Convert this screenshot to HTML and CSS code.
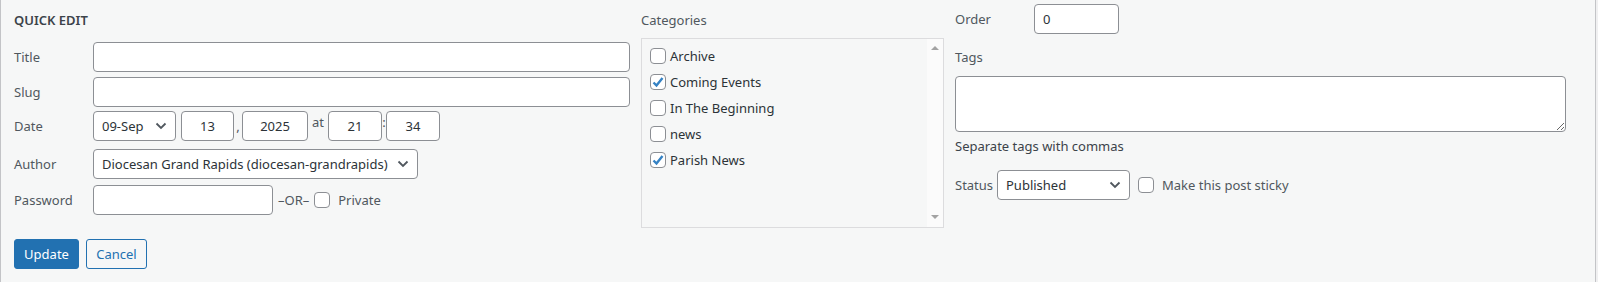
FILE: index.html
```html
<!DOCTYPE html>
<html lang="en">
<head>
	<meta charset="UTF-8">
	<title>Quick Edit</title>
<link rel="stylesheet" href="styles.css">
</head>
<body>
	<div class="quick-edit">
		<div class="col-left">
			<div class="legend">QUICK EDIT</div>
			<div class="field field-title">
				<span class="field-label">Title</span>
				<input class="text wide" type="text" value="">
			</div>
			<div class="field field-slug">
				<span class="field-label">Slug</span>
				<input class="text wide" type="text" value="">
			</div>
			<div class="field field-date">
				<span class="field-label">Date</span>
				<div class="select sel-month">
					<span>09-Sep</span>
					<svg class="chev" width="12" height="8" viewBox="0 0 12 8"><polyline points="1.5,1.5 6,6 10.5,1.5" fill="none" stroke="#50575e" stroke-width="1.8"/></svg>
				</div>
				<input class="text num day" type="text" value="13">
				<span class="sep sep-comma">,</span>
				<input class="text num year" type="text" value="2025">
				<span class="sep sep-at">at</span>
				<input class="text num hour" type="text" value="21">
				<span class="sep sep-colon">:</span>
				<input class="text num minute" type="text" value="34">
			</div>
			<div class="field field-author">
				<span class="field-label">Author</span>
				<div class="select sel-author">
					<span>Diocesan Grand Rapids (diocesan-grandrapids)</span>
					<svg class="chev" width="12" height="8" viewBox="0 0 12 8"><polyline points="1.5,1.5 6,6 10.5,1.5" fill="none" stroke="#50575e" stroke-width="1.8"/></svg>
				</div>
			</div>
			<div class="field field-password">
				<span class="field-label">Password</span>
				<input class="text pass" type="text" value="">
				<span class="or">&ndash;OR&ndash;</span>
				<span class="check"></span>
				<span class="check-text">Private</span>
			</div>
			<div class="buttons">
				<a href="javascript:;" class="btn btn-primary">Update</a>
				<a href="javascript:;" class="btn btn-secondary">Cancel</a>
			</div>
		</div>

		<div class="col-center">
			<div class="cat-label">Categories</div>
			<div class="cat-box">
				<ul class="cat-list">
					<li><span class="check"></span>Archive</li>
					<li><span class="check checked"><svg width="14" height="14" viewBox="0 0 14 14"><polyline points="2.5,7.5 5.5,10.5 11.5,3" fill="none" stroke="#3582c4" stroke-width="2.4"/></svg></span>Coming Events</li>
					<li><span class="check"></span>In The Beginning</li>
					<li><span class="check"></span>news</li>
					<li><span class="check checked"><svg width="14" height="14" viewBox="0 0 14 14"><polyline points="2.5,7.5 5.5,10.5 11.5,3" fill="none" stroke="#3582c4" stroke-width="2.4"/></svg></span>Parish News</li>
				</ul>
				<div class="scrollbar">
					<span class="arrow-up"></span>
					<span class="arrow-down"></span>
				</div>
			</div>
		</div>

		<div class="col-right">
			<div class="field field-order">
				<span class="field-label">Order</span>
				<input class="text order" type="text" value="0">
			</div>
			<div class="tags-label">Tags</div>
			<textarea class="tags"></textarea>
			<div class="howto">Separate tags with commas</div>
			<div class="field field-status">
				<span class="status-label">Status</span>
				<div class="select sel-status">
					<span>Published</span>
					<svg class="chev" width="12" height="8" viewBox="0 0 12 8"><polyline points="1.5,1.5 6,6 10.5,1.5" fill="none" stroke="#50575e" stroke-width="1.8"/></svg>
				</div>
				<span class="check sticky"></span>
				<span class="check-text">Make this post sticky</span>
			</div>
		</div>
	</div>
</body>
</html>
```

FILE: styles.css
```css
*{margin: 0;padding: 0;list-style: none;box-sizing: border-box}
body{
	background: #f0f0f1;
	font-family: "Noto Sans", "Open Sans", sans-serif;
	font-size: 13px;
	color: #1d2327;
}
.quick-edit{
	width: 1596px;
	height: 282px;
	display: flex;
	padding-left: 13px;
	background: #f6f7f7;
	border-left: 1px solid #c3c4c7;
	border-right: 1px solid #c3c4c7;
}
.col-left{
	width: 617px;
}
.col-center{
	width: 303px;
	margin-left: 10px;
}
.col-right{
	width: 611px;
	margin-left: 11px;
}
.legend{
	margin-top: 4px;
	height: 32px;
	line-height: 32px;
	font-weight: 600;
	color: #3c434a;
}
.field{
	display: flex;
	align-items: center;
	height: 30px;
}
.field-label{
	width: 79px;
	flex: none;
	color: #50575e;
}
.field-title{margin-top: 6px}
.field-slug{margin-top: 5px}
.field-date{margin-top: 4px}
.field-author{margin-top: 8px}
.field-password{margin-top: 6px}

.text{
	height: 30px;
	border: 1px solid #8c8f94;
	border-radius: 4px;
	background: #fff;
	padding: 0 8px;
	font: inherit;
	color: #2c3338;
	outline: none;
}
.wide{width: 537px}
.num{text-align: center;padding: 0}
.day{width: 53px}
.year{width: 66px}
.hour{width: 54px}
.minute{width: 54px}
.pass{width: 180px}
.order{width: 85px}

.select{
	height: 30px;
	display: flex;
	align-items: center;
	justify-content: space-between;
	border: 1px solid #8c8f94;
	border-radius: 4px;
	background: #fff;
	padding: 0 8px 0 8px;
	color: #2c3338;
	white-space: nowrap;
}
.select .chev{flex: none}
.sel-month{width: 83px;margin-right: 5px}
.sel-author{width: 325px}
.sel-status{width: 133px}

.sep{
	color: #50575e;
	text-align: center;
	align-self: flex-start;
	line-height: 22px;
}
.sep-comma{width: 8px;align-self: center;line-height: 30px}
.sep-at{width: 20px}
.sep-colon{width: 4px}

.or{
	margin-left: 5px;
	margin-right: 5px;
	color: #50575e;
}
.check{
	display: inline-flex;
	align-items: center;
	justify-content: center;
	flex: none;
	width: 16px;
	height: 16px;
	border: 1px solid #8c8f94;
	border-radius: 4px;
	background: #fff;
}
.check-text{
	margin-left: 8px;
	color: #50575e;
}

.buttons{
	display: flex;
	margin-top: 24px;
}
.btn{
	display: block;
	height: 30px;
	line-height: 28px;
	text-align: center;
	text-decoration: none;
	border-radius: 3px;
	border: 1px solid #2271b1;
}
.btn-primary{
	width: 65px;
	background: #2271b1;
	color: #fff;
}
.btn-secondary{
	width: 61px;
	margin-left: 7px;
	background: #f6f7f7;
	color: #2271b1;
}

.cat-label{
	margin-top: 4px;
	height: 32px;
	line-height: 32px;
	color: #50575e;
}
.cat-box{
	margin-top: 2px;
	height: 190px;
	display: flex;
	border: 1px solid #dcdcde;
}
.cat-list{
	flex: 1;
	padding: 4px 0 0 8px;
}
.cat-list li{
	display: flex;
	align-items: center;
	height: 26px;
	color: #2c3338;
}
.cat-list .check{margin-right: 4px}
.scrollbar{
	width: 16px;
	display: flex;
	flex-direction: column;
	justify-content: space-between;
	align-items: center;
	padding: 7px 0 8px;
	background: #fbfbfb;
}
.arrow-up{
	width: 0;
	height: 0;
	border-left: 4px solid transparent;
	border-right: 4px solid transparent;
	border-bottom: 4px solid #a3a3a3;
}
.arrow-down{
	width: 0;
	height: 0;
	border-left: 4px solid transparent;
	border-right: 4px solid transparent;
	border-top: 4px solid #a3a3a3;
}

.field-order{margin-top: 4px}
.tags-label{
	margin-top: 8px;
	height: 30px;
	line-height: 30px;
	color: #50575e;
}
.tags{
	display: block;
	margin-top: 4px;
	width: 611px;
	height: 56px;
	border: 1px solid #8c8f94;
	border-radius: 4px;
	background: #fff;
	font: inherit;
	outline: none;
}
.howto{
	margin-top: 4px;
	height: 20px;
	line-height: 20px;
	color: #3c434a;
}
.field-status{margin-top: 14px}
.status-label{
	width: 42px;
	color: #50575e;
}
.sticky{margin-left: 8px}
```
